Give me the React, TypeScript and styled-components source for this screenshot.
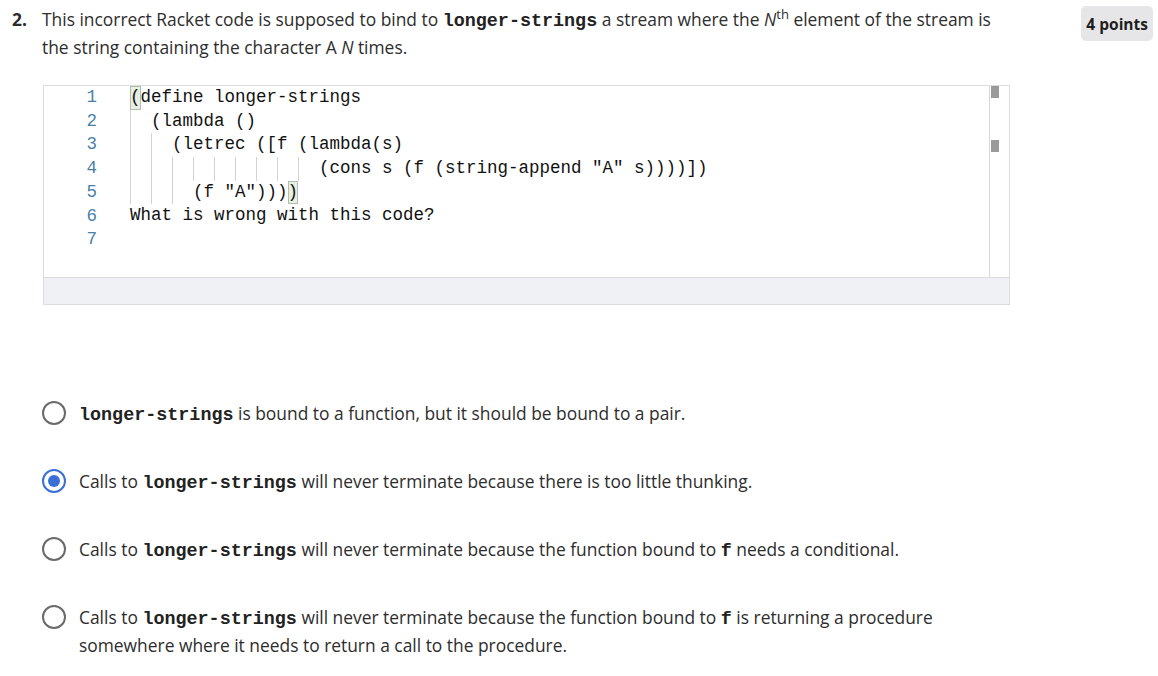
import React from "react";
import styled, { createGlobalStyle } from "styled-components";

const Global = createGlobalStyle`
  html, body { margin: 0; padding: 0; background: #fff; }
  body { font-family: "Open Sans", "Noto Sans", sans-serif; font-size: 17.4px; color: #2d2d2d; }
`;

const Page = styled.div`
  display: grid;
  grid-template-columns: 30px 968px 1fr;
  padding: 5px 5px 0 12px;
  width: 1158px;
  box-sizing: border-box;
`;

const Num = styled.div`
  font-weight: 700;
  line-height: 28px;
`;

const Body = styled.div`
  display: flex;
  flex-direction: column;
`;

const Prompt = styled.p`
  margin: 0;
  line-height: 28px;
`;

const Sup = styled.sup`
  font-size: 0.75em;
  line-height: 0;
`;

const Badge = styled.div`
  justify-self: end;
  align-self: start;
  margin-top: 1px;
  background: #e6e6e8;
  border-radius: 5px;
  padding: 0 5px;
  height: 35px;
  display: flex;
  align-items: center;
  font-weight: 700;
  font-size: 15.5px;
  color: #1e1e1e;
`;

const Code = styled.code`
  font-family: "Liberation Mono", "Courier New", monospace;
  font-weight: 700;
  font-size: 18.4px;
  line-height: 1;
  color: #222;
`;

const Editor = styled.div`
  margin: 24px 0 0 1px;
  width: 967px;
  box-sizing: border-box;
  border: 1px solid #dcdcdc;
  display: flex;
  flex-direction: column;
`;

const EditorMain = styled.div`
  height: 191px;
  display: flex;
  background: #fff;
`;

const Gutter = styled.div`
  width: 64px;
  padding-right: 11px;
  box-sizing: border-box;
  text-align: right;
  font-family: "Liberation Mono", monospace;
  font-size: 17.5px;
  line-height: 23.7px;
  color: #4a7fa6;
`;

const Lines = styled.div`
  flex: 1;
  padding-left: 22px;
  font-family: "Liberation Mono", monospace;
  font-size: 17.5px;
  line-height: 23.7px;
  color: #111;
  white-space: pre;
`;

const Line = styled.div`
  height: 23.7px;
  display: flex;
  align-items: stretch;
`;

const Guide = styled.span`
  display: inline-block;
  width: 2ch;
  border-left: 1px solid #d3d3d3;
  box-sizing: border-box;
`;

const Bracket = styled.span`
  background: #e7eee2;
  outline: 1px solid #b4bcae;
  outline-offset: -1px;
`;

const ScrollTrack = styled.div`
  width: 18px;
  border-left: 1px solid #d8d8d8;
  display: flex;
  flex-direction: column;
  padding-left: 1px;
`;

const Marker = styled.div<{ $top: number }>`
  width: 8px;
  height: 12px;
  background: #9a9a9a;
  margin-top: ${(p) => p.$top}px;
`;

const StatusBar = styled.div`
  height: 26px;
  border-top: 1px solid #dcdcdc;
  background: #f0f1f4;
`;

const Options = styled.div`
  margin-top: 94px;
  display: flex;
  flex-direction: column;
  gap: 40px;
`;

const Option = styled.label`
  display: flex;
  align-items: flex-start;
  gap: 13px;
  line-height: 28px;
`;

const Radio = styled.span<{ $checked?: boolean }>`
  flex: none;
  width: 24px;
  height: 24px;
  margin-top: 2px;
  border-radius: 50%;
  box-sizing: border-box;
  border: 2.5px solid ${(p) => (p.$checked ? "#3c6fd6" : "#6a6a6a")};
  display: flex;
  align-items: center;
  justify-content: center;
  &::after {
    content: "";
    display: ${(p) => (p.$checked ? "block" : "none")};
    width: 12px;
    height: 12px;
    border-radius: 50%;
    background: #3c6fd6;
  }
`;

const OptText = styled.span`
  flex: 1;
`;

const guides = (n: number) =>
  Array.from({ length: n }).map((_, i) => <Guide key={i}> </Guide>);

export default function App() {
  return (
    <>
      <Global />
      <Page>
        <Num>2.</Num>
        <Body>
          <Prompt>
            This incorrect Racket code is supposed to bind to <Code>longer-strings</Code> a stream where
            the <i>N</i>
            <Sup>th</Sup> element of the stream is the string containing the character A <i>N</i> times.
          </Prompt>
          <Editor>
            <EditorMain>
              <Gutter>
                {[1, 2, 3, 4, 5, 6, 7].map((n) => (
                  <div key={n}>{n}</div>
                ))}
              </Gutter>
              <Lines>
                <Line>
                  <Bracket>(</Bracket>define longer-strings
                </Line>
                <Line>
                  {guides(1)}(lambda ()
                </Line>
                <Line>
                  {guides(2)}(letrec ([f (lambda(s)
                </Line>
                <Line>
                  {guides(9)}(cons s (f (string-append "A" s))))])
                </Line>
                <Line>
                  {guides(3)}(f "A")))<Bracket>)</Bracket>
                </Line>
                <Line>What is wrong with this code?</Line>
                <Line> </Line>
              </Lines>
              <ScrollTrack>
                <Marker $top={0} />
                <Marker $top={42} />
              </ScrollTrack>
            </EditorMain>
            <StatusBar />
          </Editor>
          <Options>
            <Option>
              <Radio />
              <OptText>
                <Code>longer-strings</Code> is bound to a function, but it should be bound to a pair.
              </OptText>
            </Option>
            <Option>
              <Radio $checked />
              <OptText>
                Calls to <Code>longer-strings</Code> will never terminate because there is too little thunking.
              </OptText>
            </Option>
            <Option>
              <Radio />
              <OptText>
                Calls to <Code>longer-strings</Code> will never terminate because the function bound to{" "}
                <Code>f</Code> needs a conditional.
              </OptText>
            </Option>
            <Option>
              <Radio />
              <OptText>
                Calls to <Code>longer-strings</Code> will never terminate because the function bound to{" "}
                <Code>f</Code> is returning a procedure somewhere where it needs to return a call to the
                procedure.
              </OptText>
            </Option>
          </Options>
        </Body>
        <Badge>4 points</Badge>
      </Page>
    </>
  );
}
